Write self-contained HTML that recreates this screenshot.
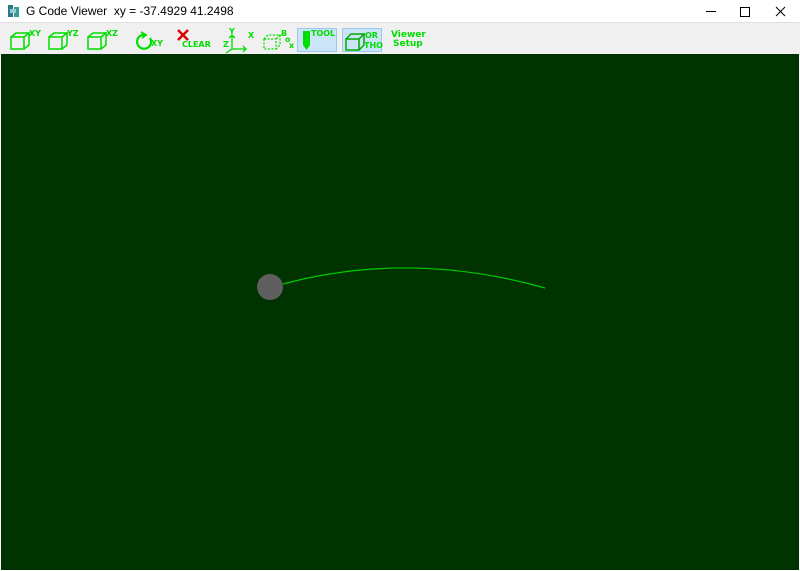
<!DOCTYPE html>
<html><head><style>
body{margin:0;width:800px;height:571px;overflow:hidden;font-family:"Liberation Sans",sans-serif;background:#fff;position:relative}
.title{position:absolute;left:0;top:0;width:800px;height:22px;background:#fff}
.tb{position:absolute;left:0;top:22px;width:800px;height:32px;background:#f0f0f0;border-top:1px solid #e0e0e0}
.cv{position:absolute;left:1px;top:54px;width:798px;height:516px;background:#003300}
.lbl{position:absolute;font-family:"DejaVu Sans",sans-serif;font-weight:bold;color:#00dd00;font-size:8px;line-height:8px}
.hl{position:absolute;background:#cce4f7;border:1px solid #99c9ef}
</style></head><body>
<div class="title">
<svg style="position:absolute;left:7px;top:4px" width="14" height="14"><rect x="1" y="1" width="5" height="12" fill="#2a7a8a"/><rect x="7" y="3" width="5" height="10" fill="#3a9aa0"/><rect x="3" y="5" width="6" height="4" fill="#9cc"/></svg>
<span style="position:absolute;left:26px;top:4px;font-size:12px;color:#000">G Code Viewer&nbsp; xy = -37.4929 41.2498</span>
<svg style="position:absolute;left:700px;top:0" width="100" height="22" stroke="#000" fill="none" stroke-width="1"><line x1="6" y1="11.5" x2="16" y2="11.5"/><rect x="40.5" y="7.5" width="9" height="9"/><line x1="76" y1="7" x2="85" y2="16"/><line x1="85" y1="7" x2="76" y2="16"/></svg>
</div>
<div class="tb">
<div class="hl" style="left:297px;top:5px;width:38px;height:22px"></div>
<div class="hl" style="left:342px;top:5px;width:38px;height:22px"></div>
<svg style="position:absolute;left:0;top:0" width="420" height="32" fill="none" stroke="#00dd00" stroke-width="1.5">
<g><path d="M11 14 h13 v12 h-13 z M11 14 l5 -4 h13 l-5 4 M29 10 v12 l-5 4"/></g>
<g transform="translate(38,0)"><path d="M11 14 h13 v12 h-13 z M11 14 l5 -4 h13 l-5 4 M29 10 v12 l-5 4"/></g>
<g transform="translate(77,0)"><path d="M11 14 h13 v12 h-13 z M11 14 l5 -4 h13 l-5 4 M29 10 v12 l-5 4"/></g>
<path d="M146 12 a7 7 0 1 0 4 3" stroke-width="2.2"/><path d="M141 9 l5 3 l-4 3" stroke-width="1.8"/>
<path d="M178 7 l10 10 M188 7 l-10 10" stroke="#e00000" stroke-width="2.5"/>
<path d="M232 26 v-14 M229 15 l3 -3 l3 3 M232 26 h14 M243 23 l3 3 l-3 3 M232 26 l-6 4" stroke-width="1.3"/>
<path d="M264 16 h12 v10 h-12 z M264 16 l4 -4 h12 l-4 4 M280 12 v10 l-4 4" stroke-dasharray="2 1.5" stroke-width="1.3"/>
<path d="M303 8 h7 v14 l-3.5 5 l-3.5 -5 z" fill="#00dd00" stroke="none"/>
<path d="M346 16 h13 v11 h-13 z M346 16 l5 -5 h13 l-5 5 M364 11 v11 l-5 5" stroke="#00aa00"/>
</svg>
<div class="lbl" style="left:29px;top:7px">XY</div>
<div class="lbl" style="left:67px;top:7px">YZ</div>
<div class="lbl" style="left:106px;top:7px">XZ</div>
<div class="lbl" style="left:151px;top:17px">XY</div>
<div class="lbl" style="left:182px;top:18px">CLEAR</div>
<div class="lbl" style="left:229px;top:5px">Y</div>
<div class="lbl" style="left:248px;top:9px">X</div>
<div class="lbl" style="left:223px;top:18px">Z</div>
<div class="lbl" style="left:281px;top:7px">B</div>
<div class="lbl" style="left:285px;top:13px">o</div>
<div class="lbl" style="left:289px;top:19px">x</div>
<div class="lbl" style="left:311px;top:7px">TOOL</div>
<div class="lbl" style="left:365px;top:9px">OR</div>
<div class="lbl" style="left:364px;top:19px">THO</div>
<div class="lbl" style="left:391px;top:8px;font-size:9px">Viewer</div>
<div class="lbl" style="left:393px;top:17px;font-size:9px">Setup</div>
</div>
<div class="cv"></div>
<svg width="800" height="571" style="position:absolute;left:0;top:0">
<path d="M283 284 Q410 250 545 288" fill="none" stroke="#00cc00" stroke-width="1.2"/>
<circle cx="270" cy="287" r="13" fill="#5f5f5f"/>
</svg>
</body></html>
